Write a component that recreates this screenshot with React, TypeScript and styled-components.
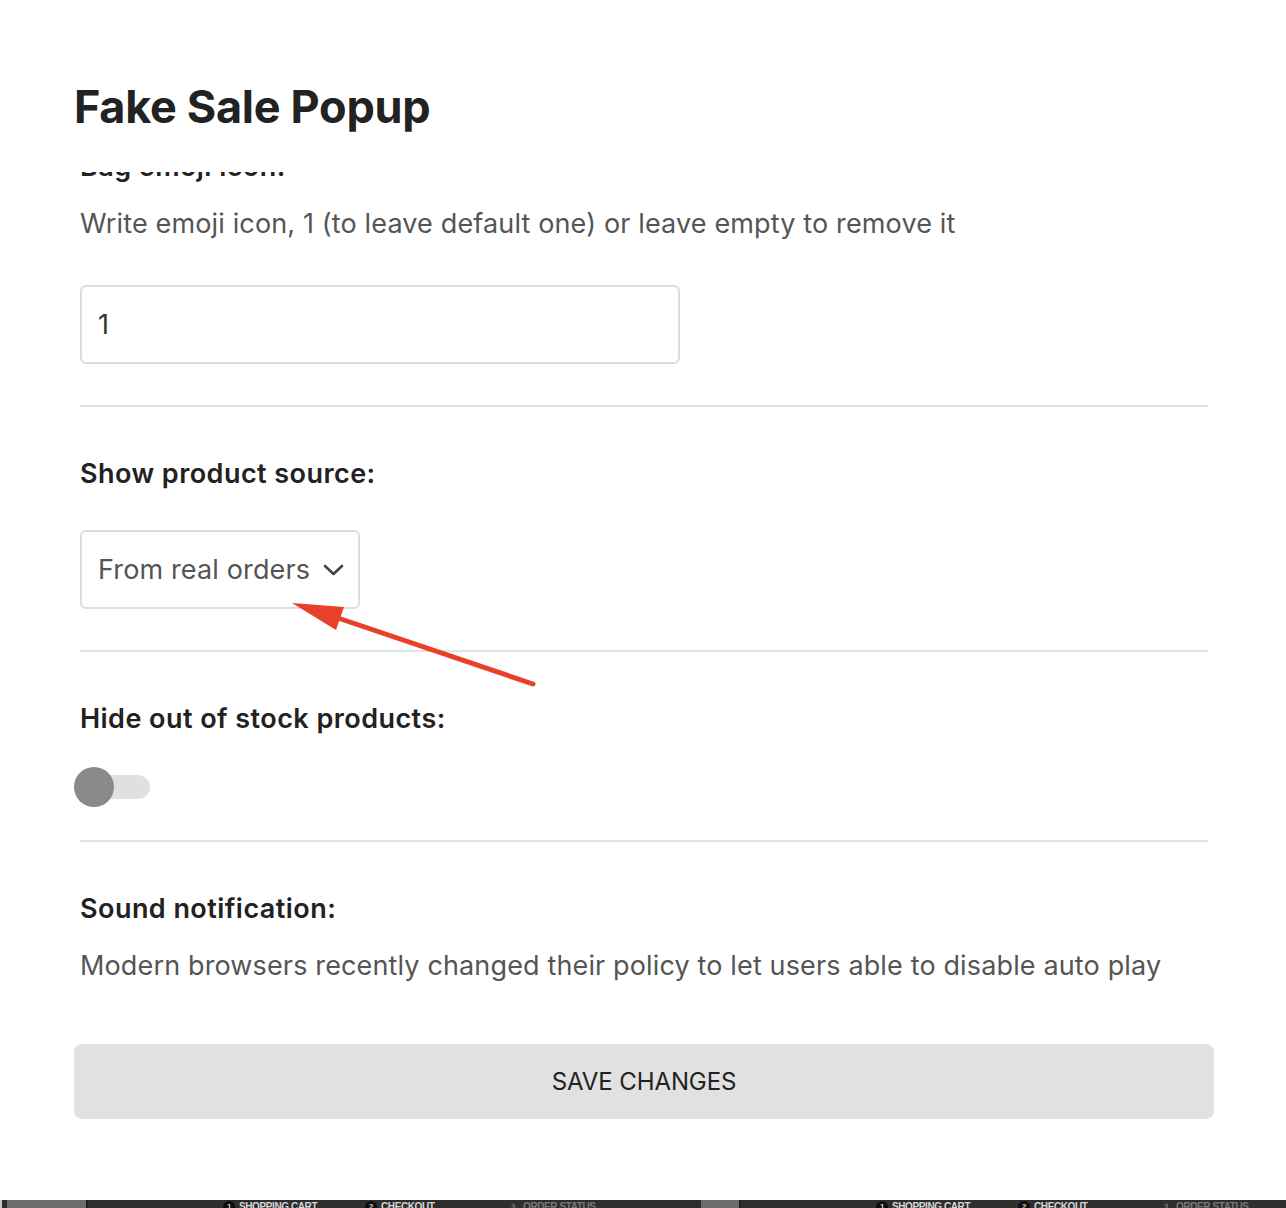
import { useLayoutEffect, useRef, useState } from "react";
import styled, { createGlobalStyle } from "styled-components";

const GlobalStyle = createGlobalStyle`
  html, body {
    margin: 0;
    padding: 0;
    background: #ffffff;
  }
  body {
    font-family: Inter, "Noto Sans", "Liberation Sans", sans-serif;
    -webkit-font-smoothing: antialiased;
  }
  * {
    box-sizing: border-box;
  }
`;

const steps = [
  { num: "1", label: "SHOPPING CART", done: true },
  { num: "2", label: "CHECKOUT", done: true },
  { num: "3", label: "ORDER STATUS", done: false },
];

export default function App() {
  const scrollRef = useRef<HTMLDivElement>(null);
  const [emoji, setEmoji] = useState("1");
  const [hideOutOfStock, setHideOutOfStock] = useState(false);

  // the settings list is shown scrolled down a little
  useLayoutEffect(() => {
    if (scrollRef.current) {
      scrollRef.current.scrollTop = 72;
    }
  }, []);

  return (
    <Page>
      <GlobalStyle />
      <Modal>
        <Title>Fake Sale Popup</Title>
        <ScrollArea ref={scrollRef}>
          <Section>
            <Label>Bag emoji icon:</Label>
            <Description>
              Write emoji icon, 1 (to leave default one) or leave empty to remove it
            </Description>
            <TextInput value={emoji} onChange={(e) => setEmoji(e.target.value)} />
          </Section>
          <Section>
            <Label>Show product source:</Label>
            <SelectBox type="button">
              From real orders
              <svg width="21" height="14" viewBox="0 0 21 14" fill="none">
                <polyline
                  points="2,3 10.5,11 19,3"
                  stroke="#444"
                  strokeWidth="2.6"
                  strokeLinecap="round"
                  strokeLinejoin="round"
                />
              </svg>
            </SelectBox>
          </Section>
          <Section $bottom={41}>
            <Label>Hide out of stock products:</Label>
            <Switch
              type="button"
              $on={hideOutOfStock}
              onClick={() => setHideOutOfStock(!hideOutOfStock)}
            >
              <Knob $on={hideOutOfStock} />
            </Switch>
          </Section>
          <Section>
            <Label>Sound notification:</Label>
            <Description>
              Modern browsers recently changed their policy to let users able to disable auto play
            </Description>
            <Description>
              Sound notification will only play after the visitor interacts with the page
            </Description>
          </Section>
        </ScrollArea>
        <SaveButton type="button">SAVE CHANGES</SaveButton>
      </Modal>

      <StoreStrip>
        <EdgeLine />
        <Preview $wide $offset={7}>
          <GrayBlock $w={81} />
          <NavBar>
            {steps.map((s) => (
              <Step key={s.num} $done={s.done}>
                <StepNum $done={s.done}>{s.num}</StepNum>
                {s.label}
              </Step>
            ))}
          </NavBar>
        </Preview>
        <Preview $wide={false} $offset={0}>
          <GrayBlock $w={40} />
          <NavBar>
            {steps.map((s) => (
              <Step key={s.num} $done={s.done}>
                <StepNum $done={s.done}>{s.num}</StepNum>
                {s.label}
              </Step>
            ))}
          </NavBar>
        </Preview>
      </StoreStrip>

      <Annotation width="1286" height="1208" viewBox="0 0 1286 1208">
        <line
          x1="533"
          y1="684"
          x2="335"
          y2="617"
          stroke="#e8402a"
          strokeWidth="5"
          strokeLinecap="round"
        />
        <polygon points="292,603 344,607 336,630" fill="#e8402a" />
      </Annotation>
    </Page>
  );
}

const Page = styled.div`
  position: relative;
  width: 1286px;
  height: 1208px;
  overflow: hidden;
  display: flex;
  flex-direction: column;
`;

const Modal = styled.div`
  height: 1200px;
  background: #ffffff;
  padding: 80px 72px 0 74px;
  display: flex;
  flex-direction: column;
`;

const Title = styled.h1`
  margin: 0 0 39px;
  font-size: 45px;
  line-height: 53px;
  font-weight: 700;
  color: #222222;
  letter-spacing: -0.3px;
`;

const ScrollArea = styled.div`
  height: 832px;
  overflow: hidden;
  padding: 0 6px;
`;

const Section = styled.div<{ $bottom?: number }>`
  padding: 46px 0 ${({ $bottom }) => $bottom ?? 41}px;
  border-bottom: 2px solid #e2e2e2;

  &:last-child {
    border-bottom: none;
  }
`;

const Label = styled.div`
  font-size: 27px;
  line-height: 42px;
  font-weight: 600;
  color: #222222;
  letter-spacing: 0.45px;
`;

const Description = styled.div`
  margin-top: 15px;
  font-size: 27px;
  line-height: 42px;
  font-weight: 400;
  color: #555555;
  letter-spacing: 0.14px;
`;

const TextInput = styled.input`
  display: block;
  margin-top: 40px;
  width: 600px;
  height: 79px;
  padding: 0 16px;
  border: 2px solid #dddddd;
  border-radius: 6px;
  font-family: inherit;
  font-size: 27px;
  color: #333333;
  outline: none;
  background: #ffffff;
`;

const SelectBox = styled.button`
  display: flex;
  align-items: center;
  gap: 13px;
  margin-top: 35px;
  height: 79px;
  padding: 0 14px 0 16px;
  border: 2px solid #dddddd;
  border-radius: 6px;
  background: #ffffff;
  font-family: inherit;
  font-size: 27px;
  letter-spacing: 0.14px;
  color: #555555;
  cursor: pointer;
`;

const Switch = styled.button<{ $on: boolean }>`
  position: relative;
  display: block;
  margin-top: 35px;
  width: 70px;
  height: 24px;
  padding: 0;
  border: none;
  border-radius: 12px;
  background: ${({ $on }) => ($on ? "#b7d7c4" : "#e0e0e0")};
  cursor: pointer;
`;

const Knob = styled.span<{ $on: boolean }>`
  position: absolute;
  top: -8px;
  left: ${({ $on }) => ($on ? "36px" : "-6px")};
  width: 40px;
  height: 40px;
  border-radius: 50%;
  background: ${({ $on }) => ($on ? "#2e8b57" : "#8a8a8a")};
`;

const SaveButton = styled.button`
  margin-top: 40px;
  width: 100%;
  height: 75px;
  border: none;
  border-radius: 8px;
  background: #e1e1e1;
  font-family: inherit;
  font-size: 24px;
  font-weight: 400;
  color: #222222;
  letter-spacing: -0.1px;
  cursor: pointer;
`;

const StoreStrip = styled.div`
  height: 8px;
  display: flex;
  overflow: hidden;
  background: #2d2d2d;
`;

const EdgeLine = styled.div`
  width: 2px;
  background: #c8c8c8;
  flex: none;
`;

const Preview = styled.div<{ $wide: boolean; $offset: number }>`
  display: flex;
  padding-left: ${({ $offset }) => Math.max($offset - 2, 0)}px;
  flex: ${({ $wide }) => ($wide ? "0 0 699px" : "1")};
`;

const GrayBlock = styled.div<{ $w: number }>`
  width: ${({ $w }) => $w}px;
  background: #6b6b6b;
  border-right: 2px solid #1e1e1e;
  flex: none;
`;

const NavBar = styled.div`
  flex: 1;
  display: flex;
  padding-left: 135px;
  background: #2e2e2e;
`;

const Step = styled.div<{ $done: boolean }>`
  display: flex;
  gap: 4px;
  width: ${({ $done }) => ($done ? "142px" : "auto")};
  margin-top: 1px;
  font-family: "Liberation Sans", sans-serif;
  font-size: 10px;
  line-height: 12px;
  font-weight: 700;
  color: ${({ $done }) => ($done ? "#d6d6d6" : "#7a7a7a")};
  letter-spacing: -0.4px;
`;

const StepNum = styled.span<{ $done: boolean }>`
  width: 12px;
  height: 12px;
  border-radius: 50%;
  background: ${({ $done }) => ($done ? "#0e0e0e" : "transparent")};
  color: ${({ $done }) => ($done ? "#d6d6d6" : "#7a7a7a")};
  font-size: 8px;
  text-align: center;
`;

const Annotation = styled.svg`
  position: absolute;
  left: 0;
  top: 0;
  pointer-events: none;
`;
